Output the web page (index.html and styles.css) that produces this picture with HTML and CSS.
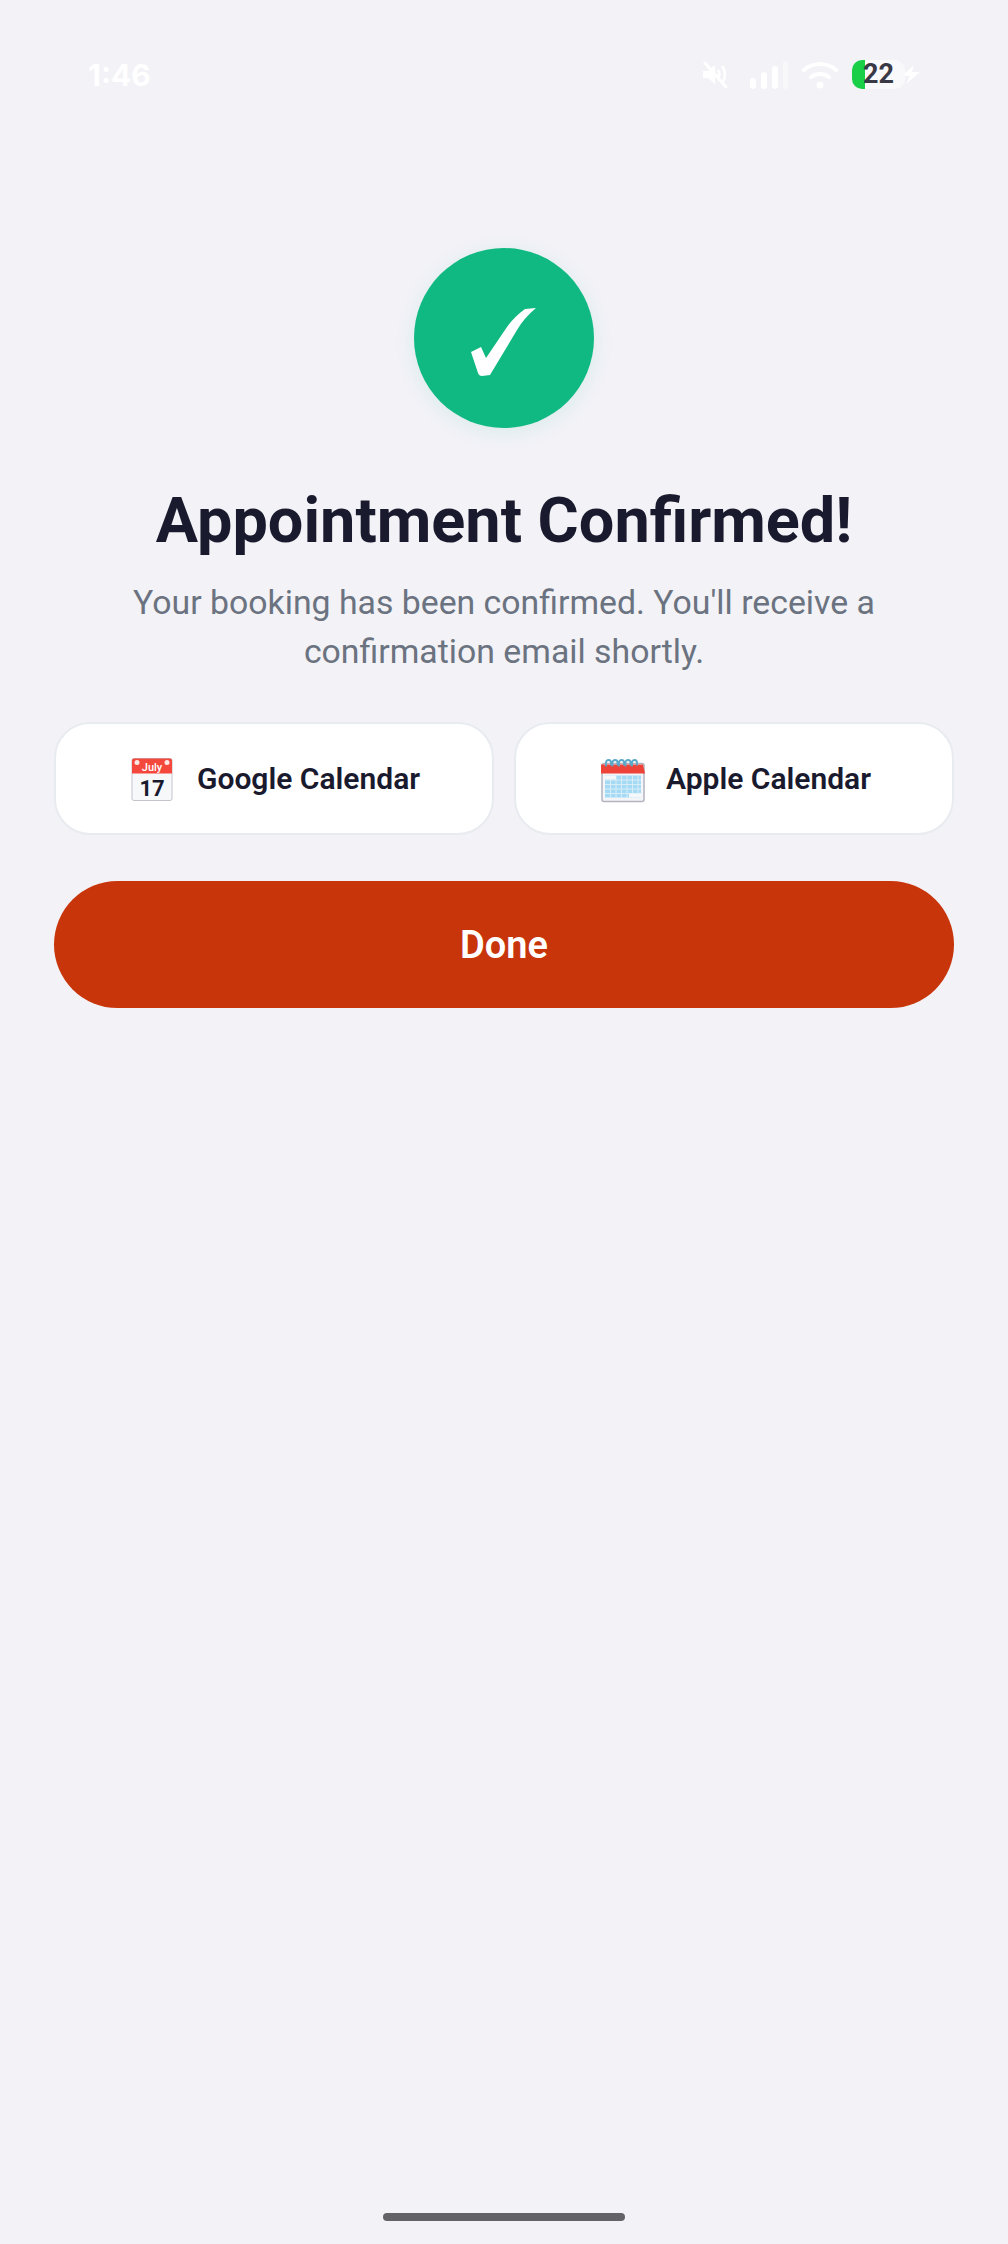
FILE: index.html
```html
<!DOCTYPE html>
<html lang="en">
<head>
    <meta charset="UTF-8">
    <meta name="viewport" content="width=device-width, initial-scale=1.0">
    <title>Appointment Confirmed</title>
    <link rel="stylesheet" href="styles.css">
</head>
<body>
    <div class="screen">
        <div class="statusbar">
            <span class="time">1:46</span>
            <div class="status-icons">
                <svg class="ic-mute" width="26" height="27" viewBox="0 0 26 27">
                    <path d="M1 10h5l7-6v19l-7-6H1z" fill="#fff"/>
                    <path d="M16 9c2 3 2 6 0 9" fill="none" stroke="#fff" stroke-width="2.500"/>
                    <path d="M20 5c4 5 4 12 0 17" fill="none" stroke="#fff" stroke-width="2.500"/>
                    <path d="M3 2l21 24" stroke="#fff" stroke-width="3" stroke-linecap="round"/>
                </svg>
                <svg class="ic-signal" width="38" height="28" viewBox="0 0 38 28">
                    <rect x="0" y="17" width="6" height="11" rx="3" fill="#fff"/>
                    <rect x="11" y="11" width="6" height="17" rx="3" fill="#fff"/>
                    <rect x="22" y="5" width="6" height="23" rx="3" fill="#fff"/>
                    <rect x="33" y="0" width="5" height="28" rx="2.500" fill="#f8f8fb"/>
                </svg>
                <svg class="ic-wifi" width="36" height="28" viewBox="0 0 36 28">
                    <path d="M2 9c9-8 23-8 32 0" fill="none" stroke="#fff" stroke-width="4" stroke-linecap="round"/>
                    <path d="M9 16c5-4 13-4 18 0" fill="none" stroke="#fff" stroke-width="4" stroke-linecap="round"/>
                    <circle cx="18" cy="24" r="3.500" fill="#fff"/>
                </svg>
                <div class="battery">
                    <div class="battery-fill"></div>
                    <span class="battery-num">22</span>
                </div>
                <svg class="ic-bolt" width="18" height="19" viewBox="0 0 18 19">
                    <path d="M12 0L0 11h8L4 19 18 7h-8z" fill="#fff"/>
                </svg>
            </div>
        </div>

        <div class="content">
            <div class="check-circle">
                <svg width="180" height="180" viewBox="0 0 180 180">
                    <path d="M122 60L111 61Q100 69 93 79L72 110L67 99L57 104L64 125Q65 128 68 128L76 127L103 82Q110 70 122 60Z" fill="#fff"/>
                </svg>
            </div>
            <h1 class="title">Appointment Confirmed!</h1>
            <p class="subtitle">Your booking has been confirmed. You'll receive a confirmation email shortly.</p>

            <div class="cal-row">
                <button class="cal-btn">
                    <svg width="48" height="48" viewBox="-2 -2.500 48 48">
                        <rect x="2" y="1" width="40" height="42" rx="2" fill="#f7f8fa" stroke="#c4c4cc" stroke-width="1"/>
                        <path d="M2 3a2 2 0 0 1 2-2h36a2 2 0 0 1 2 2v13H2z" fill="#f4483c"/>
                        <circle cx="7" cy="5" r="2.500" fill="#fde8e4"/>
                        <circle cx="37" cy="5" r="2.500" fill="#fde8e4"/>
                        <text class="cal-month" x="22" y="13" text-anchor="middle">July</text>
                        <text class="cal-day" x="22" y="38" text-anchor="middle">17</text>
                    </svg>
                    <span>Google Calendar</span>
                </button>
                <button class="cal-btn">
                    <svg width="48" height="48" viewBox="-3 -2.500 48 48">
                        <rect x="2" y="6" width="42" height="38" rx="2" fill="#f4f5f8" stroke="#b4b4c0" stroke-width="1.500"/>
                        <path d="M1 7h42l2 9H1z" fill="#ee4338"/>
                        <rect x="5" y="18" width="36" height="22" fill="#a5daf4"/>
                        <path d="M10.500 18v22M16 18v22M21.500 18v22M27 18v22M32.500 18v22M38 18v22M5 22.500h36M5 27h36M5 31.500h36M5 36h36" stroke="#d8edf8" stroke-width="1"/>
                        <rect x="5" y="18" width="11" height="4" fill="#f4f8fb"/>
                        <rect x="29" y="36" width="12" height="4" fill="#f4f8fb"/>
                        <path d="M6 9V5a2.500 2.500 0 0 1 5 0v3M12.500 9V5a2.500 2.500 0 0 1 5 0v3M19 9V5a2.500 2.500 0 0 1 5 0v3M25.500 9V5a2.500 2.500 0 0 1 5 0v3M32 9V5a2.500 2.500 0 0 1 5 0v3" fill="none" stroke="#5ba8c8" stroke-width="1.800"/>
                    </svg>
                    <span>Apple Calendar</span>
                </button>
            </div>

            <button class="done-btn">Done</button>
        </div>

        <div class="home-bar"></div>
    </div>
</body>
</html>
```

FILE: styles.css
```css
* {
    box-sizing: border-box;
}

body {
    margin: 0;
    background-color: #f2f2f7;
    font-family: Roboto, "Liberation Sans", sans-serif;
}

.screen {
    height: 2244px;
    display: flex;
    flex-direction: column;
}

.statusbar {
    height: 150px;
    padding: 60px 88px 0 88px;
    display: flex;
    justify-content: space-between;
    align-items: flex-start;
}

.time {
    font-family: Inter, sans-serif;
    font-size: 30px;
    line-height: 30px;
    font-weight: 700;
    color: #fff;
}

.status-icons {
    display: flex;
    align-items: center;
}

.ic-mute {
    margin-right: 22px;
}

.ic-signal {
    margin-right: 14px;
}

.ic-wifi {
    margin-right: 14px;
}

.battery {
    position: relative;
    width: 53px;
    height: 29px;
    border-radius: 10px;
    background-color: #f9f9fc;
    text-align: center;
}

.battery-fill {
    position: absolute;
    left: 0;
    top: 0;
    bottom: 0;
    width: 13px;
    border-radius: 10px 0 0 10px;
    background-color: #19cf48;
}

.battery-num {
    position: relative;
    font-size: 27px;
    line-height: 29px;
    font-weight: 700;
    color: #3a3a46;
}

.ic-bolt {
    margin-left: -3px;
}

.content {
    flex: 1;
    padding: 98px 54px 0 54px;
    display: flex;
    flex-direction: column;
    align-items: center;
}

.check-circle {
    width: 180px;
    height: 180px;
    border-radius: 50%;
    background-color: #10b981;
    box-shadow: 0 4px 20px rgba(16, 185, 129, 0.1);
}

.check-circle svg {
    display: block;
}

.title {
    margin: 55px 0 0 0;
    font-size: 63px;
    line-height: 76px;
    font-weight: 700;
    color: #1a1a2e;
    text-align: center;
}

.subtitle {
    margin: 19px 0 0 0;
    width: 780px;
    font-size: 33.800px;
    line-height: 49px;
    color: #6b7280;
    text-align: center;
}

.cal-row {
    margin-top: 46px;
    width: 100%;
    display: flex;
    gap: 20px;
}

.cal-btn {
    flex: 1;
    height: 113px;
    background-color: #fff;
    border: 2px solid #e8ebef;
    border-radius: 36px;
    display: flex;
    align-items: center;
    justify-content: center;
    gap: 21px;
    font-family: inherit;
    font-size: 30px;
    font-weight: 600;
    color: #1a1a2e;
    padding: 0;
}

.cal-month {
    font-family: Roboto, sans-serif;
    font-size: 11px;
    font-weight: 500;
    fill: #fff;
}

.cal-day {
    font-family: Roboto, sans-serif;
    font-size: 22px;
    font-weight: 700;
    fill: #1a1a2e;
}

.done-btn {
    margin-top: 46px;
    width: 100%;
    height: 127px;
    border: none;
    border-radius: 64px;
    background-color: #c8350a;
    color: #fff;
    font-family: inherit;
    font-size: 38px;
    font-weight: 600;
}

.home-bar {
    align-self: center;
    width: 242px;
    height: 8px;
    margin-bottom: 23px;
    border-radius: 4px;
    background-color: #636267;
}
```
